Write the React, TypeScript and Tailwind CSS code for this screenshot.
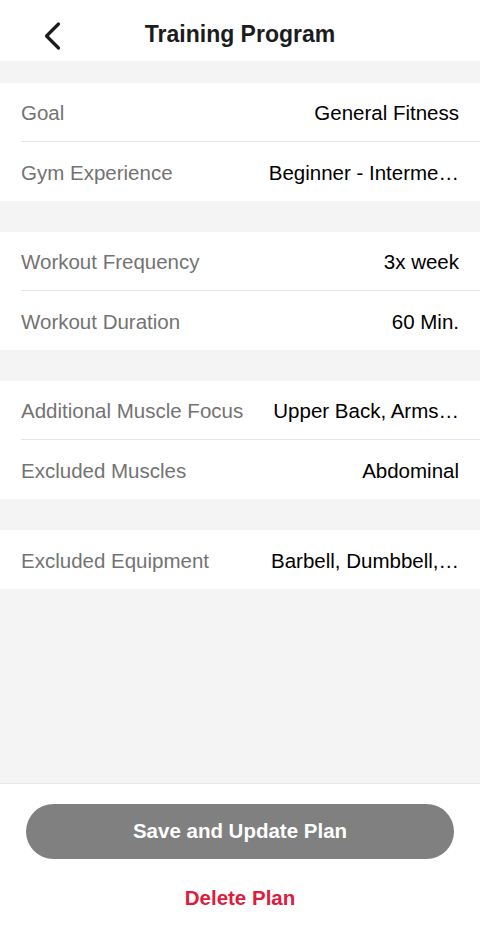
import React from "react";

type Row = { label: string; value: string };

// values shown as the app truncates them
const groups: Row[][] = [
  [
    { label: "Goal", value: "General Fitness" },
    { label: "Gym Experience", value: "Beginner - Interme…" },
  ],
  [
    { label: "Workout Frequency", value: "3x week" },
    { label: "Workout Duration", value: "60 Min." },
  ],
  [
    { label: "Additional Muscle Focus", value: "Upper Back, Arms…" },
    { label: "Excluded Muscles", value: "Abdominal" },
  ],
  [{ label: "Excluded Equipment", value: "Barbell, Dumbbell,…" }],
];

function SettingRow({ row, last }: { row: Row; last: boolean }) {
  return (
    <div className="pl-[21px]">
      <div
        className={`flex items-center pt-[3px] pr-[21px] ${
          last ? "h-[59px]" : "h-[59px] border-b border-[#e6e6e6]"
        }`}
      >
        <span className="shrink-0 text-[20.5px] text-[#737373]">{row.label}</span>
        <span className="ml-auto whitespace-nowrap pl-[16px] text-right text-[20.5px] text-black">
          {row.value}
        </span>
      </div>
    </div>
  );
}

export default function App() {
  return (
    <div
      className="flex h-[935px] w-[480px] flex-col bg-white"
      style={{ fontFamily: '"Liberation Sans", Arial, sans-serif' }}
    >
      {/* Header */}
      <div className="relative flex h-[61px] shrink-0 items-center justify-center pt-[7px]">
        <button className="absolute left-[40px] top-[18px] p-[3px]">
          <svg width="19" height="30" viewBox="0 0 19 30" fill="none">
            <polyline
              points="15.5,3 3.5,15 15.5,27"
              stroke="#1c1c1e"
              strokeWidth="3.2"
              strokeLinecap="round"
              strokeLinejoin="round"
            />
          </svg>
        </button>
        <h1 className="text-[23px] font-bold text-[#1c1c1e]">Training Program</h1>
      </div>

      {/* Settings list */}
      <div className="flex flex-1 flex-col bg-[#f4f4f4] pt-[22px]">
        {groups.map((g, gi) => (
          <div key={gi} className={`bg-white ${gi > 0 ? "mt-[31px]" : ""}`}>
            {g.map((row, ri) => (
              <SettingRow key={row.label} row={row} last={ri === g.length - 1} />
            ))}
          </div>
        ))}
      </div>

      {/* Footer */}
      <div className="flex h-[152px] shrink-0 flex-col items-center border-t border-[#e8e8e8] bg-white pt-[20px]">
        <button className="h-[55px] w-[428px] rounded-full bg-[#808080] text-[20.5px] font-bold text-white">
          Save and Update Plan
        </button>
        <button className="mt-[24px] text-[20.5px] font-bold text-[#dd1c3e]">Delete Plan</button>
      </div>
    </div>
  );
}
